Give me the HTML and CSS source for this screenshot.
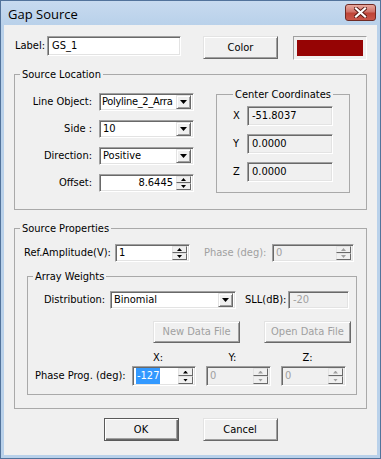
FILE: index.html
```html
<!DOCTYPE html>
<html>

<head>
    <title>Gap Source</title>
    <meta charset="utf-8">
    <link rel="stylesheet" href="styles.css">
</head>

<body>

    <div class="window">
        <div class="titlebar">
            <span class="title">Gap Source</span>
            <div class="close">
                <svg width="13" height="11" viewBox="0 0 13 11">
                    <path d="M2 1.5L11 9.5M11 1.5L2 9.5" stroke="#5a1a14" stroke-width="4" stroke-linecap="square" />
                    <path d="M2 1.5L11 9.5M11 1.5L2 9.5" stroke="#fff" stroke-width="2.2" stroke-linecap="square" />
                </svg>
            </div>
        </div>

        <div class="client">

            <div class="label-row">
                <span class="lbl">Label:</span>
                <div class="edit name-edit">GS_1</div>
                <div class="btn color-btn">Color</div>
                <div class="swatch"><div class="swatch-fill"></div></div>
            </div>

            <fieldset class="group loc">
                <legend>Source Location</legend>
                <div class="loc-body">
                    <div class="loc-grid">
                        <span class="rlbl">Line Object:</span>
                        <div class="combo"><span class="val tight">Polyline_2_Arra</span><span class="drop"></span></div>

                        <span class="rlbl">Side :</span>
                        <div class="combo"><span class="val">10</span><span class="drop"></span></div>

                        <span class="rlbl">Direction:</span>
                        <div class="combo"><span class="val">Positive</span><span class="drop"></span></div>

                        <span class="rlbl">Offset:</span>
                        <div class="spin"><span class="val right">8.6445</span><span class="arrows"><span class="up"></span><span class="down"></span></span></div>
                    </div>

                    <fieldset class="group center">
                        <legend>Center Coordinates</legend>
                        <div class="coord-grid">
                            <span>X</span>
                            <div class="edit ro">-51.8037</div>
                            <span>Y</span>
                            <div class="edit ro">0.0000</div>
                            <span>Z</span>
                            <div class="edit ro">0.0000</div>
                        </div>
                    </fieldset>
                </div>
            </fieldset>

            <fieldset class="group props">
                <legend>Source Properties</legend>
                <div class="amp-row">
                    <span class="amp-lbl">Ref.Amplitude(V):</span>
                    <div class="spin amp"><span class="val">1</span><span class="arrows"><span class="up"></span><span class="down"></span></span></div>
                    <span class="phase-lbl off">Phase (deg):</span>
                    <div class="spin phase off"><span class="val">0</span><span class="arrows"><span class="up"></span><span class="down"></span></span></div>
                </div>

                <fieldset class="group weights">
                    <legend>Array Weights</legend>
                    <div class="dist-row">
                        <span class="dist-lbl">Distribution:</span>
                        <div class="combo dist"><span class="val">Binomial</span><span class="drop"></span></div>
                        <span class="sll-lbl">SLL(dB):</span>
                        <div class="edit sll off">-20</div>
                    </div>

                    <div class="file-row">
                        <div class="btn file-btn off">New Data File</div>
                        <div class="btn file-btn off">Open Data File</div>
                    </div>

                    <div class="prog-grid">
                        <span></span>
                        <span class="axis">X:</span>
                        <span class="axis">Y:</span>
                        <span class="axis">Z:</span>

                        <span class="prog-lbl">Phase Prog. (deg):</span>
                        <div class="spin prog"><span class="val"><span class="sel">-127</span></span><span class="arrows"><span class="up"></span><span class="down"></span></span></div>
                        <div class="spin prog off"><span class="val">0</span><span class="arrows"><span class="up"></span><span class="down"></span></span></div>
                        <div class="spin prog off"><span class="val">0</span><span class="arrows"><span class="up"></span><span class="down"></span></span></div>
                    </div>
                </fieldset>
            </fieldset>

            <div class="dialog-btns">
                <div class="btn default">OK</div>
                <div class="btn">Cancel</div>
            </div>

        </div>
    </div>

</body>

</html>
```

FILE: styles.css
```css
* {
    box-sizing: border-box;
}

body {
    margin: 0;
    background-color: #fff;
}

.window {
    width: 381px;
    height: 459px;
    border: 1px solid #52739b;
    background-color: #b9d1ea;
    padding: 0 3px 3px;
    display: flex;
    flex-direction: column;
}

.titlebar {
    height: 24px;
    display: flex;
    justify-content: space-between;
    align-items: flex-start;
    background: linear-gradient(#c7daef, #b9d1ea);
    margin: 0 -3px;
    padding: 0 4px 0 7px;
}

.title {
    font-family: "Open Sans", "Noto Sans", sans-serif;
    font-size: 13px;
    line-height: 16px;
    padding-top: 5px;
    color: #000;
}

.close {
    margin-top: 3px;
    width: 31px;
    height: 17px;
    border: 1px solid #6f2a24;
    border-radius: 3px;
    background: linear-gradient(#e8a99e, #d0736a 45%, #bf4437 55%, #c9564a);
    display: flex;
    align-items: center;
    justify-content: center;
}

.client {
    height: 430px;
    background-color: #f0f0f0;
    font-family: "DejaVu Sans Condensed", "Liberation Sans", sans-serif;
    font-size: 11px;
    color: #000;
    white-space: nowrap;
}

/* common controls */

.edit,
.combo,
.spin {
    background-color: #fff;
    border: 1px solid;
    border-color: #a0a0a0 #fff #fff #a0a0a0;
    box-shadow: inset 1px 1px 0 #696969, inset -1px -1px 0 #e3e3e3;
    overflow: hidden;
}

.edit {
    height: 20px;
    line-height: 18px;
    padding-left: 4px;
}

.edit.ro,
.edit.off,
.spin.off {
    background-color: #f0f0f0;
}

.off {
    color: #a0a0a0;
}

.btn {
    background-color: #f0f0f0;
    border: 1px solid;
    border-color: #e3e3e3 #696969 #696969 #e3e3e3;
    box-shadow: inset 1px 1px 0 #fff, inset -1px -1px 0 #a0a0a0;
    text-align: center;
}

.combo,
.spin {
    display: flex;
    align-items: center;
    height: 18px;
    padding-right: 2px;
}

.combo .val,
.spin .val {
    flex: 1;
    padding-left: 3px;
    line-height: 16px;
    overflow: hidden;
}

.combo .val.tight {
    padding-left: 2px;
    letter-spacing: -0.3px;
}

.spin .val.right {
    text-align: right;
    padding-right: 3px;
}

.drop {
    width: 15px;
    height: 14px;
    background-color: #f0f0f0;
    border: 1px solid;
    border-color: #e3e3e3 #696969 #696969 #e3e3e3;
    box-shadow: inset 1px 1px 0 #fff, inset -1px -1px 0 #a0a0a0;
    display: flex;
    align-items: center;
    justify-content: center;
}

.drop::after {
    content: "";
    width: 7px;
    height: 4px;
    background-color: #000;
    clip-path: polygon(0 0, 100% 0, 50% 100%);
}

.arrows {
    width: 15px;
    height: 14px;
    display: flex;
    flex-direction: column;
}

.spin.prog .arrows {
    height: 16px;
}

.arrows .up,
.arrows .down {
    flex: 1;
    background-color: #f0f0f0;
    border: 1px solid;
    border-color: #e3e3e3 #696969 #696969 #e3e3e3;
    display: flex;
    align-items: center;
    justify-content: center;
}

.arrows .up::after,
.arrows .down::after {
    content: "";
    width: 5px;
    height: 3px;
    background-color: #000;
}

.arrows .up::after {
    clip-path: polygon(50% 0, 100% 100%, 0 100%);
}

.arrows .down::after {
    clip-path: polygon(0 0, 100% 0, 50% 100%);
}

.off .arrows .up::after,
.off .arrows .down::after {
    background-color: #a0a0a0;
}

/* group boxes */

.group {
    margin: 0;
    padding: 0;
    border: 1px solid #a9a9a9;
    min-width: 0;
}

.group legend {
    margin-left: 5px;
    padding: 0 2px;
    line-height: 13px;
}

/* top row */

.label-row {
    display: flex;
    align-items: flex-start;
    height: 24px;
    margin: 11px 0 0 11px;
}

.label-row .lbl {
    width: 32px;
    line-height: 20px;
}

.name-edit {
    width: 134px;
}

.color-btn {
    margin-left: 22px;
    width: 75px;
    height: 23px;
    line-height: 21px;
}

.swatch {
    margin-left: 15px;
    width: 74px;
    height: 24px;
    padding: 3px;
    border: 1px solid;
    border-color: #a0a0a0 #fff #fff #a0a0a0;
}

.swatch-fill {
    height: 100%;
    background-color: #960404;
}

/* source location */

.loc {
    width: 353px;
    margin: 8px 0 0 10px;
}

.loc-body {
    display: flex;
    align-items: flex-start;
    padding-bottom: 16px;
}

.loc-grid {
    display: grid;
    grid-template-columns: 77px 95px;
    grid-auto-rows: 18px;
    column-gap: 7px;
    row-gap: 9px;
    padding-top: 12px;
}

.rlbl {
    text-align: right;
    line-height: 18px;
}

.center {
    width: 134px;
    margin: 7px 0 0 22px;
}

.center legend {
    margin: 0 auto;
}

.coord-grid {
    display: grid;
    grid-template-columns: 14px 86px;
    grid-auto-rows: 20px;
    row-gap: 8px;
    padding: 5px 0 10px 16px;
    line-height: 20px;
}

/* source properties */

.props {
    width: 353px;
    margin: 12px 0 0 10px;
    padding-bottom: 13px;
}

.amp-row {
    display: flex;
    height: 18px;
    margin-top: 9px;
    padding-left: 9px;
    line-height: 18px;
}

.amp-lbl {
    width: 91px;
}

.spin.amp {
    width: 75px;
}

.phase-lbl {
    margin-left: 14px;
    width: 68px;
}

.spin.phase {
    width: 82px;
}

.weights {
    width: 330px;
    margin: 8px 0 0 12px;
    padding-bottom: 8px;
}

.dist-row {
    display: flex;
    height: 18px;
    margin-top: 8px;
    padding-left: 16px;
    line-height: 18px;
}

.dist-lbl {
    width: 66px;
}

.combo.dist {
    width: 126px;
}

.sll-lbl {
    margin-left: 9px;
    width: 43px;
}

.edit.sll {
    width: 61px;
    height: 18px;
    line-height: 16px;
}

.file-row {
    display: flex;
    justify-content: flex-end;
    gap: 24px;
    margin-top: 12px;
    padding-right: 5px;
}

.file-btn {
    width: 87px;
    height: 22px;
    line-height: 20px;
}

.prog-grid {
    display: grid;
    grid-template-columns: 87px 64px 65px 65px;
    grid-template-rows: 13px 20px;
    column-gap: 10px;
    row-gap: 2px;
    margin-top: 8px;
    padding-left: 7px;
}

.axis {
    text-align: center;
    padding-right: 12px;
    line-height: 13px;
}

.prog-lbl {
    line-height: 20px;
}

.spin.prog {
    height: 20px;
}

.sel {
    background-color: #3399ff;
    color: #fff;
    padding: 1px 1px 2px;
}

/* ok / cancel */

.dialog-btns {
    display: flex;
    justify-content: center;
    gap: 24px;
    margin-top: 9px;
}

.dialog-btns .btn {
    width: 75px;
    height: 23px;
    line-height: 21px;
}

.btn.default {
    border-color: #5a5a5a;
    box-shadow: inset 1px 1px 0 #fff, inset -1px -1px 0 #696969, inset -2px -2px 0 #a0a0a0;
}
```
